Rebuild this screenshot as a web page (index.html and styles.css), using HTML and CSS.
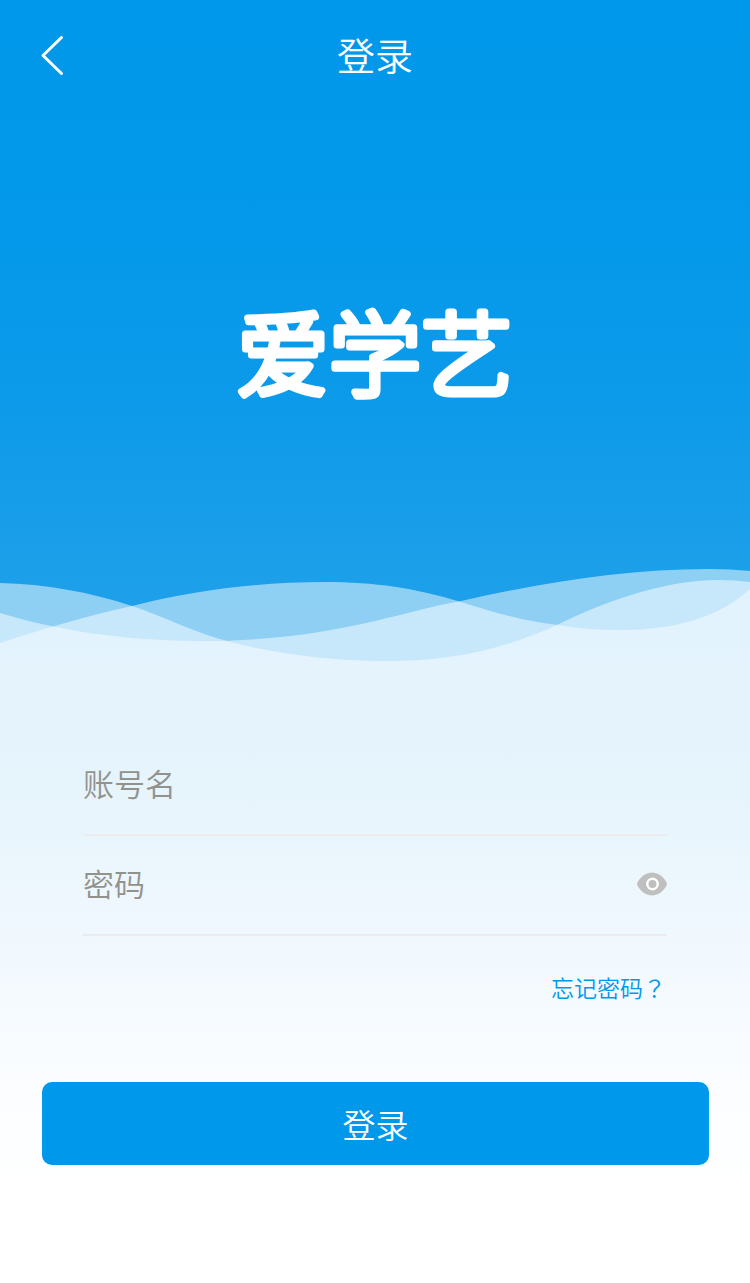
FILE: index.html
```html
<!DOCTYPE html>
<html lang="zh-CN">
<head>
<meta charset="utf-8">
<meta name="viewport" content="width=device-width, initial-scale=1">
<title>登录</title>
<link rel="stylesheet" href="styles.css">
</head>
<body>
<div class="hero">
  <header class="bar">
    <button class="icon-button back" type="button" aria-label="返回">
      <svg width="24" height="42" viewBox="0 0 24 42"><path d="M21.500 2.500 3 20.500 21.500 38.500" fill="none" stroke="#fff" stroke-width="3" stroke-linecap="round" stroke-linejoin="round"/></svg>
    </button>
    <h1 class="title">登录</h1>
  </header>
  <svg class="brand" viewBox="0 0 320 160">
    <text class="brand-name" x="160" y="116" text-anchor="middle">爱学艺</text>
  </svg>
  <svg class="waves" viewBox="0 562 750 100" preserveAspectRatio="none" aria-hidden="true">
    <path d="M0 583C45 584 90 592 132 606C168 618 195 633 230 642C278 654 330 661 385 661C450 661 502 650 557 625C600 604 660 580 720 580Q736 580 750 582V662H0Z"/>
    <path d="M0 643C40 630 85 616 132 606C195 590 260 582 325 582C375 582 415 588 461 602C495 613 520 620 557 625C580 629 600 630 622 630C675 630 720 617 750 589V662H0Z"/>
    <path d="M0 613C55 630 125 641 200 641C265 641 320 634 375 621C405 614 432 606 461 601C545 582 625 569 710 569Q731 569 750 571V662H0Z"/>
  </svg>
</div>
<form class="panel">
  <div class="field">
    <input class="text" type="text" aria-label="账号名" placeholder="账号名">
  </div>
  <div class="field">
    <input class="text" type="password" aria-label="密码" placeholder="密码">
    <button class="icon-button" type="button" aria-label="显示密码">
      <svg width="30" height="24" viewBox="0 0 30 24"><path d="M0 12C0 10 6 .5 15 .5S30 10 30 12C30 14 24 23.500 15 23.500S0 14 0 12Z" fill="#bfbfbf"/><circle cx="15.500" cy="12" r="5.200" fill="none" stroke="#fff" stroke-width="2.400"/></svg>
    </button>
  </div>
  <a class="forgot" href="#">忘记密码<span class="mark" lang="zh-TW">？</span></a>
  <button class="submit" type="submit">登录</button>
</form>
</body>
</html>
```
FILE: styles.css
```css
* {
  box-sizing: border-box;
}

body {
  margin: 0;
  min-height: 100vh;
  background: #fff;
  font-family: "Noto Sans CJK SC", sans-serif;
  font-weight: 350;
}

.hero {
  display: flex;
  flex-direction: column;
  background: linear-gradient(#0098ea 0, #0499ea 35%, #0c9aea 60%, #1c9fe9 85%, #209fe9 100%);
}

.bar {
  display: grid;
  grid-template-columns: 1fr auto 1fr;
  align-items: center;
  height: 112px;
  padding: 0 40px;
}

.icon-button {
  display: flex;
  padding: 0;
  border: 0;
  background: none;
  cursor: pointer;
}

.back {
  justify-self: start;
}

.title {
  margin: 0;
  padding-bottom: 4px;
  color: #fff;
  font-size: 38px;
  font-weight: 350;
  line-height: 56px;
}

.brand {
  align-self: center;
  width: 320px;
  height: 160px;
  margin: 161px 0 129px;
}

.brand-name {
  fill: #fff;
  stroke: #fff;
  stroke-width: 7px;
  stroke-linejoin: round;
  stroke-linecap: round;
  font-size: 92px;
  font-weight: 300;
}

.waves {
  display: block;
  width: 100%;
  height: 100px;
  fill: #fff;
  fill-opacity: 0.5;
}

.panel {
  display: flex;
  flex-direction: column;
  padding: 74px 41px 118px 42px;
  background: linear-gradient(#e4f3fc 0, #e6f4fc 20%, #f0f8fe 44%, #fbfdff 68%, #fff 86%);
}

.field {
  display: flex;
  align-items: center;
  height: 100px;
  margin: 0 42px 0 41px;
  padding-bottom: 3px;
  border-bottom: 2px solid #ececee;
}

.text {
  flex: 1;
  min-width: 0;
  padding: 0 0 2px;
  border: 0;
  outline: 0;
  background: none;
  color: #555;
  font: inherit;
  font-size: 31px;
  line-height: 46px;
}

.text::placeholder {
  color: #92928c;
  opacity: 1;
}

.forgot {
  align-self: flex-end;
  margin: 33px 43px 77px 0;
  color: #0098ea;
  font-size: 23px;
  line-height: 36px;
  text-decoration: none;
}

.mark {
  font-family: "Noto Sans CJK TC", sans-serif;
}

.submit {
  height: 83px;
  padding: 0;
  border: 0;
  border-radius: 10px;
  background: #0098ea;
  color: #fff;
  font: inherit;
  font-size: 33px;
  cursor: pointer;
}
```
